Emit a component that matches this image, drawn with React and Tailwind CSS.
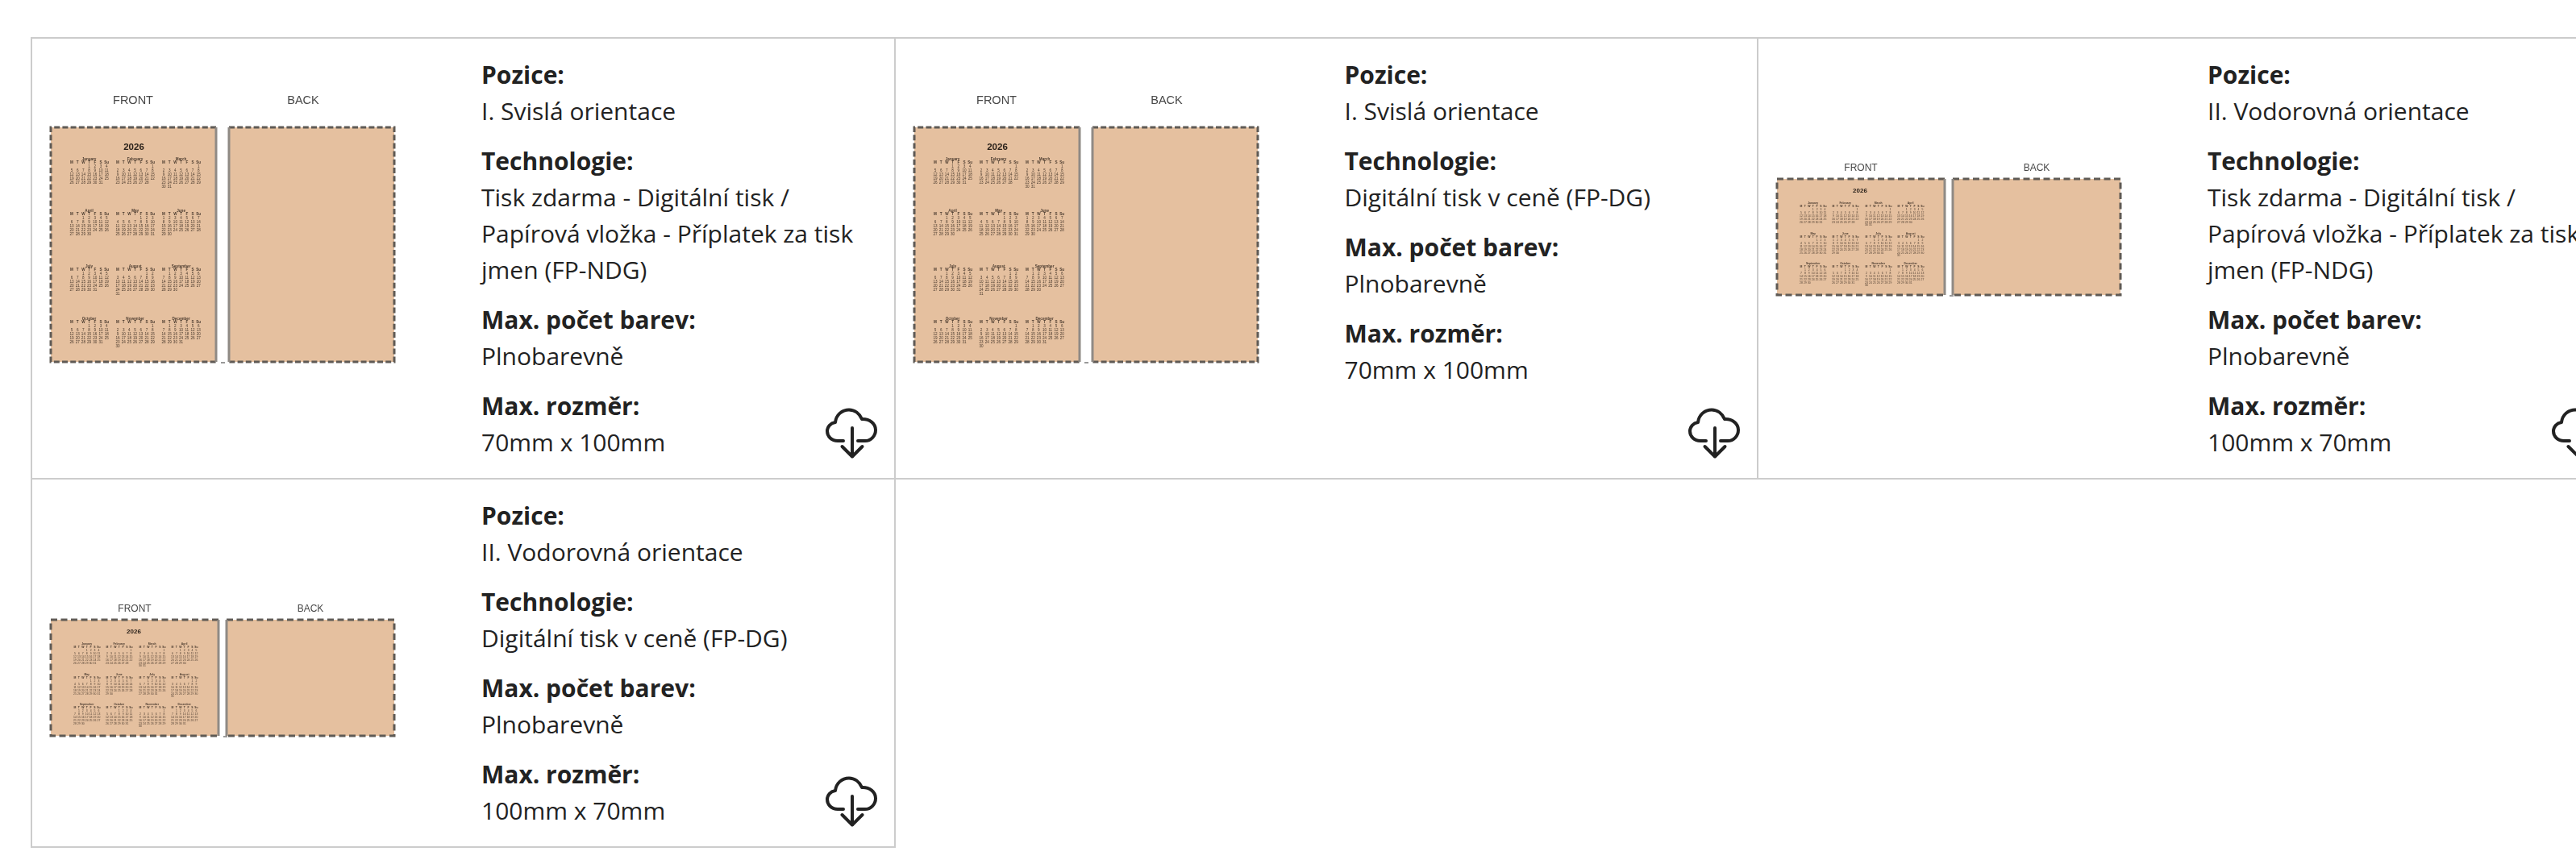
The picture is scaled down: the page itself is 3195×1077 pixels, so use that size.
import React from "react";

const MONTHS = ["January", "February", "March", "April", "May", "June", "July", "August", "September", "October", "November", "December"];
const DAYS = ["M", "T", "W", "T", "F", "S", "Su"];

const cards = [
  { pos: "I. Svislá orientace", tech: "Tisk zdarma - Digitální tisk / Papírová vložka - Příplatek za tisk jmen (FP-NDG)", size: "70mm x 100mm", portrait: true },
  { pos: "I. Svislá orientace", tech: "Digitální tisk v ceně (FP-DG)", size: "70mm x 100mm", portrait: true },
  { pos: "II. Vodorovná orientace", tech: "Tisk zdarma - Digitální tisk / Papírová vložka - Příplatek za tisk jmen (FP-NDG)", size: "100mm x 70mm", portrait: false },
  { pos: "II. Vodorovná orientace", tech: "Digitální tisk v ceně (FP-DG)", size: "100mm x 70mm", portrait: false },
];

function MonthBlock({ month, x, y, stepX, stepY, fs }) {
  const offset = (new Date(2026, month, 1).getDay() + 6) % 7;
  const total = new Date(2026, month + 1, 0).getDate();
  const dates = [];
  for (let d = 1; d <= total; d++) {
    const slot = d - 1 + offset;
    dates.push(
      <text key={d} x={x + (slot % 7) * stepX} y={y + stepY * (1 + Math.floor(slot / 7))} textAnchor="middle" fontSize={fs}>
        {d}
      </text>
    );
  }
  return (
    <g fill="#4a3a2e" fontFamily="Liberation Sans, sans-serif">
      <text x={x + 3 * stepX} y={y - stepY * 0.9} textAnchor="middle" fontSize={fs} fontWeight="700">
        {MONTHS[month]}
      </text>
      {DAYS.map((d, i) => (
        <text key={i} x={x + i * stepX} y={y} textAnchor="middle" fontSize={fs} fontWeight="700">
          {d}
        </text>
      ))}
      {dates}
    </g>
  );
}

// product preview, coordinates are px from the top left of the svg
function Artwork({ portrait }) {
  const panelW = portrait ? 205 : 208;
  const panelH = portrait ? 291 : 144;
  const top = portrait ? 70 : 134;
  const left = 3;
  const backX = portrait ? 224 : 221;
  const cols = portrait ? [24, 81, 138] : [28, 68, 109, 149];
  const rows = portrait ? [45, 109, 178, 243] : [35, 73, 110];
  const stepX = portrait ? 7.2 : 4.9;
  const stepY = portrait ? 5 : 3.9;
  const fs = portrait ? 4.6 : 3.4;
  const labelY = portrait ? top - 29 : top - 10;
  const dash = portrait ? "7 3.2" : "8 4.5";

  return (
    <svg width="440" height="400" viewBox="0 0 440 400" className="blur-[0.7px]">
      <g textAnchor="middle" fontSize={portrait ? 14.5 : 12} fill="#484848" fontFamily="Liberation Sans, sans-serif">
        <text x={portrait ? 105 : 107} y={labelY}>FRONT</text>
        <text x={portrait ? 316 : 325} y={labelY}>BACK</text>
      </g>

      <rect x={left} y={top} width={panelW} height={panelH} fill="#e5c09f" />
      <rect x={backX} y={top} width={panelW} height={panelH} fill="#e5c09f" />
      <g fill="none" stroke="#5f5a55" strokeWidth="3">
        <path d={`M${left + panelW} ${top}H${left}V${top + panelH}H${left + panelW}`} strokeDasharray={dash} />
        <path d={`M${backX} ${top}H${backX + panelW}V${top + panelH}H${backX}`} strokeDasharray={dash} />
        <path d={`M${left + panelW} ${top}V${top + panelH}M${backX} ${top}V${top + panelH}`} stroke="#8f8a85" />
      </g>
      <path d={`M${left + panelW + 6} ${top + panelH + 1}h5`} stroke="#777" strokeWidth="1.5" />

      <text x={left + 103} y={top + (portrait ? 28 : 17)} textAnchor="middle" fontSize={portrait ? 11.5 : 8} fontWeight="700" fill="#2a211a" fontFamily="Liberation Sans, sans-serif">
        2026
      </text>
      {rows.map((ry, r) =>
        cols.map((cx, c) => (
          <MonthBlock
            key={`${r}-${c}`}
            month={r * cols.length + c}
            x={left + cx + 2}
            y={top + ry}
            stepX={stepX}
            stepY={stepY}
            fs={fs}
          />
        ))
      )}
    </svg>
  );
}

function CloudIcon() {
  return (
    <svg width="64" height="64" viewBox="0 0 64 64" fill="none" stroke="#222" strokeWidth="4" strokeLinecap="round" strokeLinejoin="round" className="absolute right-[21px] bottom-[23px]">
      <path d="M22 41H15C7.5 41 2 35.5 2 29C2 23.5 6 19 12 18C13 9 20 2.5 29 2.5C36 2.5 42 7 45 14C54.5 13.5 62 19.5 62 27.5C62 35 56 41 49 41H40" />
      <path d="M33 25V60" />
      <path d="M20.5 48L33 60.5L45.5 48" />
    </svg>
  );
}

function Field({ label, value }) {
  return (
    <div className="mb-[17px] last:mb-0">
      <div className="font-bold">{label}</div>
      <div>{value}</div>
    </div>
  );
}

function Card({ card }) {
  return (
    <div className="relative flex border-r-2 border-b-2 border-[#cccccc]">
      <div className="w-[557px] shrink-0 pt-[40px] pl-[20px]">
        <Artwork portrait={card.portrait} />
      </div>
      <div className="py-[22px] pr-[22px]">
        <Field label="Pozice:" value={card.pos} />
        <Field label="Technologie:" value={card.tech} />
        <Field label="Max. počet barev:" value="Plnobarevně" />
        <Field label="Max. rozměr:" value={card.size} />
      </div>
      <CloudIcon />
    </div>
  );
}

export default function App() {
  return (
    <div className="h-[1077px] overflow-hidden bg-white pt-[46px] pl-[38px] font-['Open_Sans',sans-serif] text-[30px] leading-[45px] text-[#222222]">
      <div className="grid w-max grid-cols-[repeat(3,1070.5px)] border-t-2 border-l-2 border-[#cccccc]">
        {cards.map((c, i) => (
          <Card key={i} card={c} />
        ))}
      </div>
    </div>
  );
}
